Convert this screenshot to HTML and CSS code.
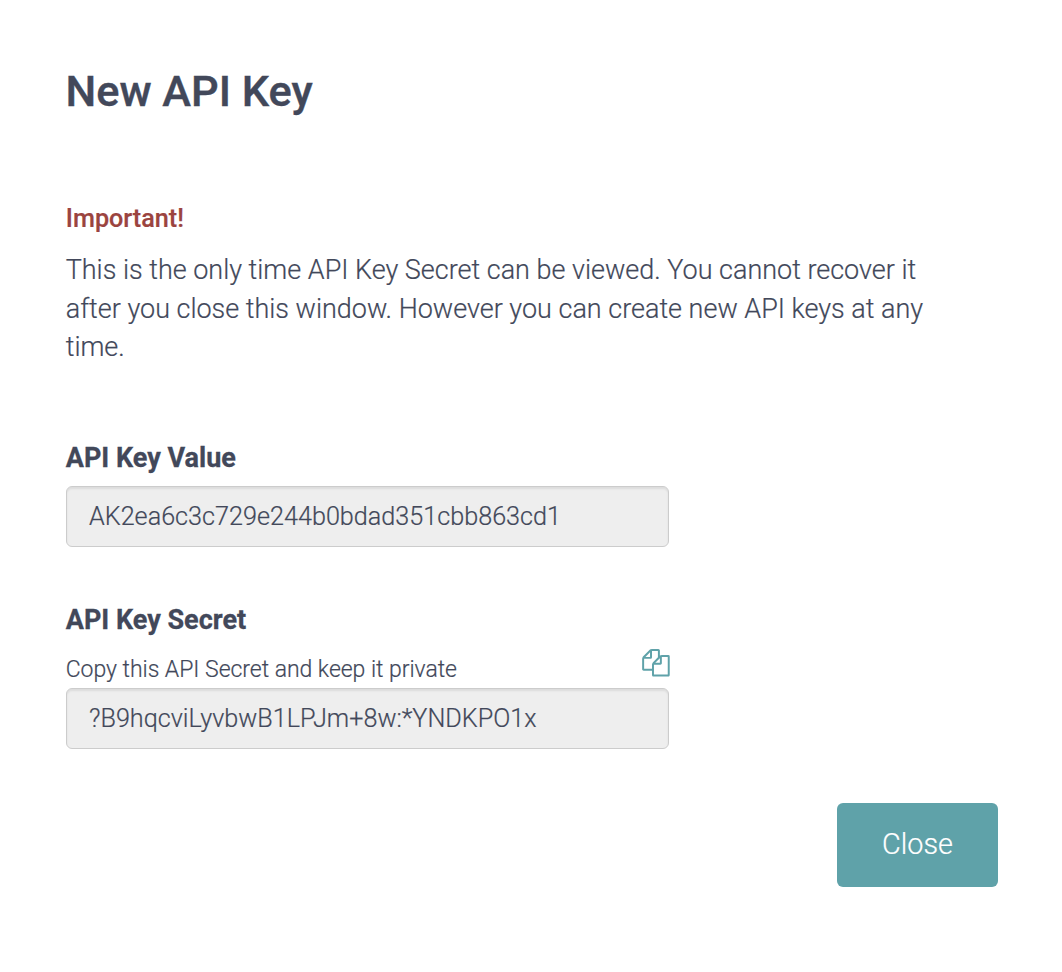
FILE: index.html
```html
<!DOCTYPE html>
<html lang="en">
<head>
<meta charset="utf-8">
<title>New API Key</title>
<link rel="stylesheet" href="styles.css">
</head>
<body>
<main class="dialog">
  <h1 class="title">New API Key</h1>
  <h2 class="warning">Important!</h2>
  <p class="message">This is the only time API Key Secret can be viewed. You cannot recover it<br>after you close this window. However you can create new API keys at any<br>time.</p>
  <section class="field">
    <h3 class="label">API Key Value</h3>
    <div class="value">AK2ea6c3c729e244b0bdad351cbb863cd1</div>
  </section>
  <section class="field secret">
    <h3 class="label">API Key Secret</h3>
    <div class="hint-row">
      <span class="hint">Copy this API Secret and keep it private</span>
      <svg class="copy" viewBox="-10 0 1820 1820" role="img" aria-label="Copy"><path fill="currentColor" d="M1696 384q40 0 68 28t28 68v1216q0 40-28 68t-68 28h-960q-40 0-68-28t-28-68v-288h-544q-40 0-68-28t-28-68v-672q0-40 20-88t48-76l408-408q28-28 76-48t88-20h416q40 0 68 28t28 68v328q68-40 128-40h416zm-544 213l-299 299h299v-299zm-640-384l-299 299h299v-299zm196 647l316-316v-416h-384v416q0 40-28 68t-68 28h-416v640h512v-256q0-40 20-88t48-76zm956 804v-1152h-384v416q0 40-28 68t-68 28h-416v640h896z"/></svg>
    </div>
    <div class="value">?B9hqcviLyvbwB1LPJm+8w:*YNDKPO1x</div>
  </section>
  <footer class="actions"><button class="close">Close</button></footer>
</main>
</body>
</html>
```
FILE: styles.css
```css
* { box-sizing: border-box; }
body { margin: 0; background: #fff; color: #42485a; font-family: Roboto, sans-serif; }
.dialog { height: 972px; padding: 67px 64px 0 66px; }
h1, h2, h3, p { margin: 0; }
.title { margin-left: -0.5px; font-size: 43.3px; line-height: 50px; font-weight: 500; -webkit-text-stroke: 0.4px currentColor; }
.warning { margin-top: 86px; margin-left: -0.2px; font-size: 25.2px; line-height: 32px; font-weight: 500; color: #9b443f; -webkit-text-stroke: 0.2px currentColor; }
.message { margin-top: 16px; margin-left: -0.3px; font-size: 26.98px; line-height: 38.5px; font-weight: 300; white-space: nowrap; -webkit-text-stroke: 0.2px currentColor; }
.field { width: 603px; margin-top: 74px; }
.label { margin-left: -0.2px; font-size: 27px; line-height: 34px; font-weight: 700; -webkit-text-stroke: 0.3px currentColor; }
.value { height: 61px; margin-top: 11px; padding: 0 22px; border: 1px solid #ccc; border-radius: 6px; background: #eee; box-shadow: inset 0 2px 2px rgba(0,0,0,.075); font-size: 25.2px; line-height: 59px; font-weight: 300; -webkit-text-stroke: 0.2px currentColor; }
.secret { margin-top: 56px; }
.hint-row { display: flex; justify-content: space-between; height: 51px; }
.hint { margin-left: -0.3px; padding-top: 17px; font-size: 23px; letter-spacing: -0.03px; line-height: 32px; font-weight: 300; white-space: nowrap; -webkit-text-stroke: 0.2px currentColor; }
.copy { width: 28px; height: 28px; margin: 12px -1px 0 0; color: #5fa2a9; }
.secret .value { margin-top: 0; }
.actions { display: flex; justify-content: flex-end; margin-top: 54px; }
.close { width: 161px; height: 84px; padding: 0 0 2px; border: 0; border-radius: 6px; background: #5fa2a9; color: #fff; font: 300 28.8px Roboto, sans-serif; -webkit-text-stroke: 0.2px currentColor; }
```
